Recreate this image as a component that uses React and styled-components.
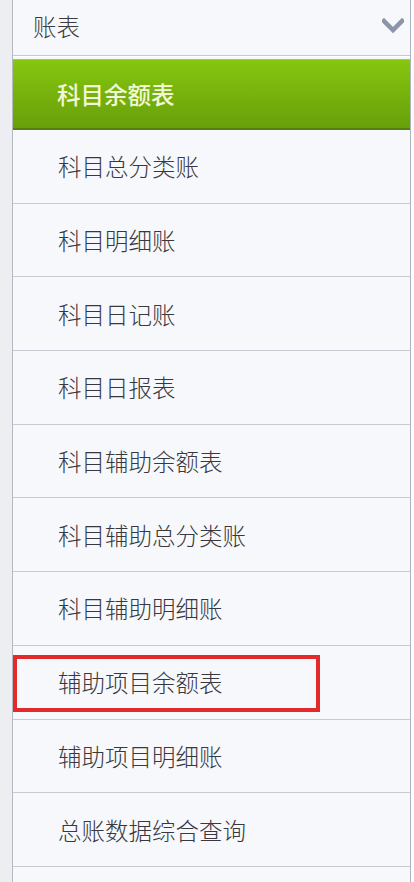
import styled, { createGlobalStyle } from "styled-components";

const GlobalStyle = createGlobalStyle`
  html, body {
    margin: 0;
    padding: 0;
    background: #fdfdfe;
  }
  body {
    font-family: "Noto Sans CJK SC", "Noto Sans", sans-serif;
  }
`;

const Page = styled.div`
  display: flex;
  width: 414px;
  height: 882px;
  overflow: hidden;
`;

const Gutter = styled.div`
  width: 12px;
  flex: none;
  background: #eceef2;
  border-right: 1px solid #b4b8c0;
`;

const Panel = styled.div`
  width: 397px;
  flex: none;
  display: flex;
  flex-direction: column;
  background: #f7f8fb;
  border-right: 1px solid #b0b4bc;
`;

const Header = styled.div`
  height: 56px;
  display: flex;
  align-items: center;
  justify-content: space-between;
  padding: 0 6px 4px 20px;
  box-sizing: border-box;
  border-bottom: 1px solid #c4c8cf;
  box-shadow: 0 1px 0 #ffffff;
  font-size: 23.5px;
  font-weight: 300;
  color: #3c3c40;
`;

const Active = styled.div`
  margin-top: 3px;
  height: 71px;
  display: flex;
  align-items: center;
  padding-left: 44px;
  box-sizing: border-box;
  background: linear-gradient(#86c70f, #75b00c 55%, #67a00a);
  border-top: 1px solid #9ad33a;
  border-bottom: 2px solid #557f12;
  font-size: 23.5px;
  font-weight: 500;
  color: #f2f7d6;
`;

const Row = styled.div`
  position: relative;
  height: 73.7px;
  display: flex;
  align-items: center;
  padding-left: 45px;
  box-sizing: border-box;
  border-bottom: 1.5px solid #c6cad2;
  font-size: 23.5px;
  font-weight: 300;
  color: #38383e;
`;

const Mark = styled.div`
  position: absolute;
  left: 0;
  top: 9px;
  width: 307px;
  height: 57px;
  box-sizing: border-box;
  border: 4px solid #e22a2a;
`;

const items = [
  "科目总分类账",
  "科目明细账",
  "科目日记账",
  "科目日报表",
  "科目辅助余额表",
  "科目辅助总分类账",
  "科目辅助明细账",
  "辅助项目余额表",
  "辅助项目明细账",
  "总账数据综合查询",
];

const Chevron = () => (
  <svg width="22" height="18" viewBox="0 0 22 18">
    <path d="M2 4 L11 13 L20 4" fill="none" stroke="#8c95a8" strokeWidth="4.5" strokeLinecap="square" />
  </svg>
);

export default function App() {
  return (
    <>
      <GlobalStyle />
      <Page>
        <Gutter />
        <Panel>
          <Header>
            <span>账表</span>
            <Chevron />
          </Header>
          <Active>科目余额表</Active>
          {items.map((t) => (
            <Row key={t}>
              {t}
              {t === "辅助项目余额表" && <Mark />}
            </Row>
          ))}
        </Panel>
      </Page>
    </>
  );
}
